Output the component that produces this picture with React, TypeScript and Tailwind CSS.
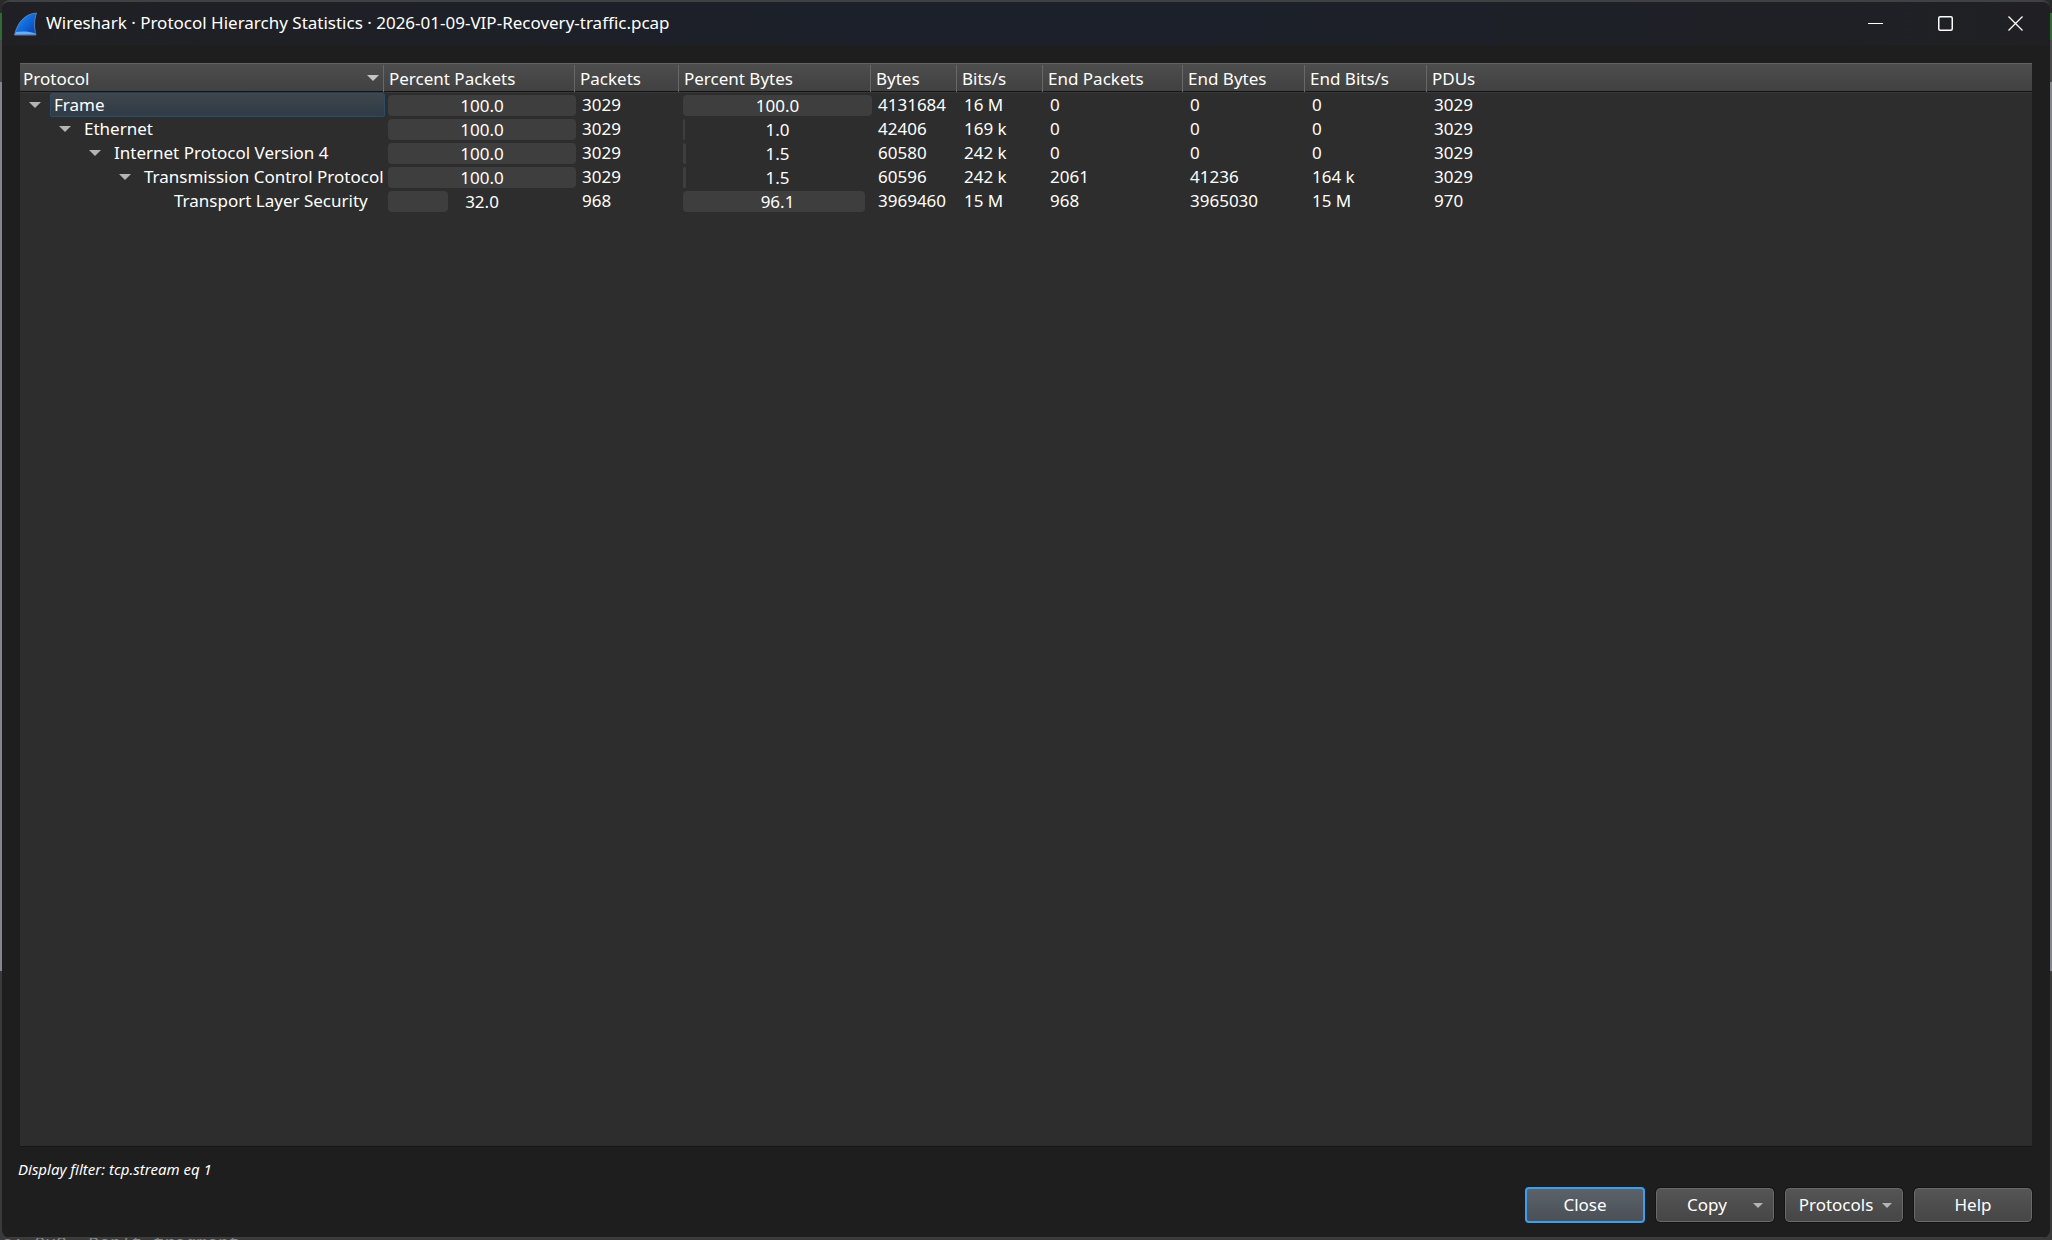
import React from "react";

type Row = {
  name: string;
  depth: number;
  leaf?: boolean;
  pctPackets: string;
  packets: string;
  pctBytes: string;
  rest: string[];
};

const rows: Row[] = [
  { name: "Frame", depth: 0, pctPackets: "100.0", packets: "3029", pctBytes: "100.0", rest: ["4131684", "16 M", "0", "0", "0", "3029"] },
  { name: "Ethernet", depth: 1, pctPackets: "100.0", packets: "3029", pctBytes: "1.0", rest: ["42406", "169 k", "0", "0", "0", "3029"] },
  { name: "Internet Protocol Version 4", depth: 2, pctPackets: "100.0", packets: "3029", pctBytes: "1.5", rest: ["60580", "242 k", "0", "0", "0", "3029"] },
  { name: "Transmission Control Protocol", depth: 3, pctPackets: "100.0", packets: "3029", pctBytes: "1.5", rest: ["60596", "242 k", "2061", "41236", "164 k", "3029"] },
  { name: "Transport Layer Security", depth: 4, leaf: true, pctPackets: "32.0", packets: "968", pctBytes: "96.1", rest: ["3969460", "15 M", "968", "3965030", "15 M", "970"] },
];

const headers = ["Percent Packets", "Packets", "Percent Bytes", "Bytes", "Bits/s", "End Packets", "End Bytes", "End Bits/s", "PDUs"];

function Triangle({ className }: { className: string }) {
  return (
    <svg viewBox="0 0 12 6" className={className} aria-hidden="true">
      <path d="M0 0h12L6 6z" fill="currentColor" />
    </svg>
  );
}

function Fin() {
  return (
    <svg viewBox="0 0 24 24" className="h-6 w-6" aria-hidden="true">
      <defs>
        <linearGradient id="fin" x1="0" y1="0" x2="1" y2="0.9">
          <stop offset="0" stopColor="#3f9df8" />
          <stop offset="0.45" stopColor="#1270e0" />
          <stop offset="1" stopColor="#0a3fae" />
        </linearGradient>
      </defs>
      <path d="M1.5 23C4.5 11 11 2 23.5 1 21 8 21 16 23 23z" fill="url(#fin)" stroke="#6f8fc0" strokeWidth="0.8" />
      <path d="M2 22.6L3 20C10 19 16 19.4 22 21.2L22.6 22.6z" fill="#6aacf4" />
    </svg>
  );
}

function Bar({ value }: { value: string }) {
  return (
    <td className="p-0 pl-[3px]">
      <div className="relative h-[21px]">
        <div className="h-full rounded bg-[#3e3e3e]" style={{ width: `${value}%` }} />
        <span className="absolute inset-0 text-center leading-[22px]">{value}</span>
      </div>
    </td>
  );
}

const plainButton =
  "flex h-[34px] w-[118px] items-center rounded border border-[#6a6a6a] bg-linear-to-b from-[#555555] to-[#464646] outline outline-[#141414]";

export default function App() {
  return (
    <div className="flex h-screen flex-col overflow-hidden bg-[linear-gradient(#2a2a2a_13px,#2f6b35_13px_40px,#4a4a4a_40px_82px,#85858f_82px_971px,#3a3a3a_971px)] px-0.5 font-['Noto_Sans',sans-serif] text-[17px] text-white">
      <main className="flex min-h-0 flex-1 flex-col overflow-hidden rounded-lg border-t-2 border-[#3f4142] bg-[#1e1e1e]">
        <header className="flex h-[43px] shrink-0 items-center bg-linear-to-r from-[#202024] via-[#1b202b] to-[#202024] pl-[11px]">
          <Fin />
          <h1 className="ml-[9px] flex-1 pb-0.5 whitespace-nowrap">Wireshark · Protocol Hierarchy Statistics · 2026-01-09-VIP-Recovery-traffic.pcap</h1>
          <button aria-label="Minimize" className="grid h-full w-[70px] place-items-center">
            <svg viewBox="0 0 15 15" className="h-[15px] w-[15px]"><path d="M0 7.5h15" stroke="white" /></svg>
          </button>
          <button aria-label="Maximize" className="grid h-full w-[70px] place-items-center">
            <svg viewBox="0 0 15 15" className="h-[15px] w-[15px]"><rect x="0.75" y="0.75" width="13.5" height="13.5" rx="1.5" fill="none" stroke="white" strokeWidth="1.5" /></svg>
          </button>
          <button aria-label="Close window" className="grid h-full w-[70px] place-items-center">
            <svg viewBox="0 0 15 15" className="h-[15px] w-[15px]"><path d="M0.5 0.5l14 14M14.5 0.5l-14 14" stroke="white" strokeWidth="1.3" /></svg>
          </button>
        </header>

        <div className="mx-[18px] mt-[18px] min-h-0 flex-1 border-b border-[#151515] bg-[#2d2d2d]">
          <table className="w-full table-fixed border-collapse text-left whitespace-nowrap">
            <colgroup>
              <col className="w-[365px]" />
              <col className="w-[191px]" />
              <col className="w-[104px]" />
              <col className="w-[192px]" />
              <col className="w-[86px]" />
              <col className="w-[86px]" />
              <col className="w-[140px]" />
              <col className="w-[122px]" />
              <col className="w-[122px]" />
              <col />
            </colgroup>
            <thead>
              <tr className="h-[30px] bg-linear-to-b from-[#4e4e4e] to-[#404040] shadow-[inset_0_1px_#626262,inset_0_-1px_#383838,inset_0_-2px_#141414]">
                <th className="p-0 font-normal">
                  <div className="mr-px flex h-[27px] justify-between border-r border-[#686868] pr-1 pl-[3px] leading-7">
                    Protocol
                    <Triangle className="mt-2.5 h-1.5 w-3 text-[#c4c4c4]" />
                  </div>
                </th>
                {headers.map((h) => (
                  <th key={h} className="group p-0 font-normal">
                    <div className="mr-px h-[27px] border-r border-[#686868] pl-1 leading-7 group-last:border-0">{h}</div>
                  </th>
                ))}
              </tr>
            </thead>
            <tbody>
              {rows.map((r) => (
                <tr key={r.name} className="h-6 leading-6">
                  <td className="p-0">
                    <div className="flex h-6 items-center">
                      <span className="shrink-0" style={{ width: r.depth * 30 }} />
                      <button aria-label={`Toggle ${r.name}`} disabled={r.leaf} className="grid h-6 w-[30px] shrink-0 place-items-center">
                        {!r.leaf && <Triangle className="h-1.5 w-3 text-[#b4b4b4]" />}
                      </button>
                      <span className={r.depth === 0 ? "h-6 flex-1 rounded-xs border border-[#2c4d68] bg-linear-to-b from-[#3e464c] to-[#2f3b46] pl-[3px] leading-[22px]" : "pl-1"}>{r.name}</span>
                    </div>
                  </td>
                  <Bar value={r.pctPackets} />
                  <td className="p-0 pl-1.5">{r.packets}</td>
                  <Bar value={r.pctBytes} />
                  {r.rest.map((v, i) => (
                    <td key={i} className="p-0 pl-1.5">{v}</td>
                  ))}
                </tr>
              ))}
            </tbody>
          </table>
        </div>

        <p className="mx-4 mt-3 text-[15px] leading-5 italic">Display filter: tcp.stream eq 1</p>
        <footer className="mx-[18px] mt-2 mb-[14px] flex h-9 items-center justify-end gap-[11px]">
          <button className="h-9 w-[120px] rounded border-2 border-[#3a9ff0] bg-linear-to-b from-[#5c626a] to-[#4b5057]">Close</button>
          <button className={plainButton}><span className="flex-1 pl-1">Copy</span><Triangle className="mr-2.5 h-[5px] w-2.5 text-[#b4b4b4]" /></button>
          <button className={plainButton}><span className="flex-1 pl-1">Protocols</span><Triangle className="mr-2.5 h-[5px] w-2.5 text-[#b4b4b4]" /></button>
          <button className={plainButton}><span className="flex-1">Help</span></button>
        </footer>
        <div className="h-px shrink-0 bg-[#3f3f3f]" />
      </main>
      <div aria-hidden="true" className="h-0.5 shrink-0 overflow-hidden font-['Liberation_Mono',monospace] text-lg leading-3 text-[#8a8a8a]">s: 0x2, Don't fragment</div>
    </div>
  );
}
